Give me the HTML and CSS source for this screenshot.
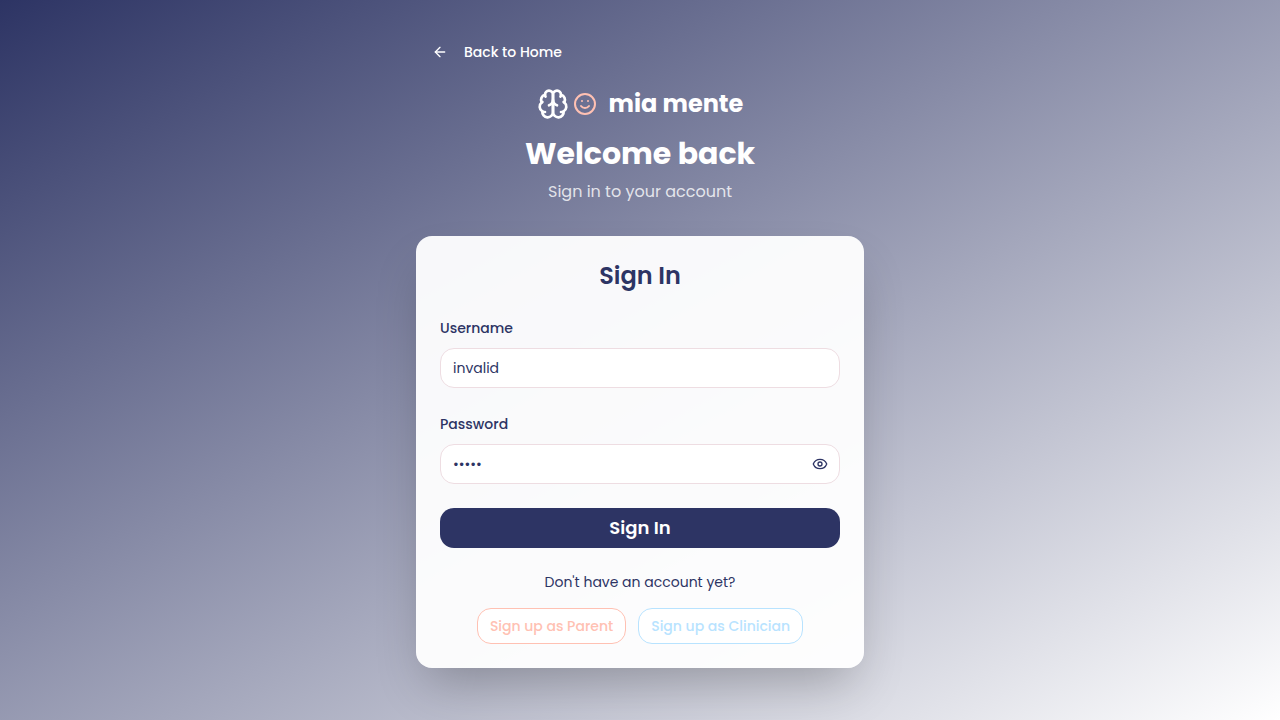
FILE: index.html
```html
<!DOCTYPE html>
<html lang="en">
<head>
<meta charset="utf-8">
<meta name="viewport" content="width=device-width, initial-scale=1">
<title>Sign In - mia mente</title>
<link rel="stylesheet" href="styles.css">
</head>
<body>
<main class="page">
  <div class="column">
    <a class="back" href="#">
      <svg class="icon icon-sm" viewBox="0 0 24 24" aria-hidden="true"><path d="m12 19-7-7 7-7"/><path d="M19 12H5"/></svg>
      Back to Home
    </a>
    <header class="intro">
      <div class="brand">
        <div class="marks">
          <svg class="icon icon-lg" viewBox="0 0 24 24" aria-hidden="true">
            <path d="M12 5a3 3 0 1 0-5.997.125 4 4 0 0 0-2.526 5.77 4 4 0 0 0 .556 6.588A4 4 0 1 0 12 18Z"/>
            <path d="M12 5a3 3 0 1 1 5.997.125 4 4 0 0 1 2.526 5.77 4 4 0 0 1-.556 6.588A4 4 0 1 1 12 18Z"/>
            <path d="M15 13a4.500 4.500 0 0 1-3-4 4.500 4.500 0 0 1-3 4"/>
            <path d="M17.599 6.500a3 3 0 0 0 .399-1.375"/>
            <path d="M6.003 5.125A3 3 0 0 0 6.401 6.500"/>
            <path d="M3.477 10.896a4 4 0 0 1 .585-.396"/>
            <path d="M19.938 10.500a4 4 0 0 1 .585.396"/>
            <path d="M6 18a4 4 0 0 1-1.967-.516"/>
            <path d="M19.967 17.484A4 4 0 0 1 18 18"/>
          </svg>
          <svg class="icon icon-md smile" viewBox="0 0 24 24" aria-hidden="true"><circle cx="12" cy="12" r="10"/><path d="M8 14s1.500 2 4 2 4-2 4-2"/><path d="M9 9h.01"/><path d="M15 9h.01"/></svg>
        </div>
        <span class="brand-name">mia mente</span>
      </div>
      <h1 class="welcome">Welcome back</h1>
      <p class="subtitle">Sign in to your account</p>
    </header>
    <section class="card">
      <h2 class="card-title">Sign In</h2>
      <form class="form">
        <div class="field">
          <label class="label" for="username">Username</label>
          <input class="input" id="username" type="text" value="invalid">
        </div>
        <div class="field">
          <label class="label" for="password">Password</label>
          <div class="password">
            <input class="input" id="password" type="password" value="wrong">
            <button class="reveal" type="button" aria-label="Show password">
              <svg class="icon icon-sm" viewBox="0 0 24 24" aria-hidden="true"><path d="M2.062 12.348a1 1 0 0 1 0-.696 10.750 10.750 0 0 1 19.876 0 1 1 0 0 1 0 .696 10.750 10.750 0 0 1-19.876 0"/><circle cx="12" cy="12" r="3"/></svg>
            </button>
          </div>
        </div>
        <button class="submit" type="submit">Sign In</button>
      </form>
      <p class="prompt">Don't have an account yet?</p>
      <div class="signup">
        <button class="outline parent" type="button">Sign up as Parent</button>
        <button class="outline clinician" type="button">Sign up as Clinician</button>
      </div>
    </section>
  </div>
</main>
</body>
</html>
```
FILE: styles.css
```css
* { box-sizing: border-box; }
body {
  margin: 0;
  font-family: Poppins, "Open Sans", sans-serif;
  color: #2d3464;
}
h1, h2, p { margin: 0; }
button, input { font: inherit; color: inherit; }
button { cursor: pointer; }

.page {
  min-height: 100vh;
  padding: 32px 16px;
  display: flex;
  justify-content: center;
  align-items: flex-start;
  background: linear-gradient(to bottom right, #2d3464, #ffffff);
}
.column { width: 100%; max-width: 448px; }

.icon {
  display: block;
  flex: none;
  fill: none;
  stroke: currentColor;
  stroke-width: 2;
  stroke-linecap: round;
  stroke-linejoin: round;
}
.icon-sm { width: 16px; height: 16px; }
.icon-md { width: 24px; height: 24px; }
.icon-lg { width: 32px; height: 32px; }

.back {
  display: inline-flex;
  align-items: center;
  gap: 16px;
  height: 40px;
  padding: 0 16px;
  font-size: 14px;
  font-weight: 500;
  color: #ffffff;
  text-decoration: none;
}

.intro {
  display: flex;
  flex-direction: column;
  align-items: center;
  margin: 16px 0 32px;
  text-align: center;
  color: #ffffff;
}
.brand { display: flex; align-items: center; gap: 12px; }
.marks { display: flex; align-items: center; gap: 4px; }
.smile { color: #ffc1b3; }
.brand-name { font-size: 24px; line-height: 32px; font-weight: 700; }
.welcome { margin-top: 16px; font-size: 30px; line-height: 36px; font-weight: 700; }
.subtitle { margin-top: 8px; font-size: 16px; line-height: 24px; color: rgba(255, 255, 255, 0.8); }

.card {
  padding: 24px;
  border-radius: 16px;
  background: rgba(255, 255, 255, 0.95);
  box-shadow: 0 25px 50px -12px rgba(0, 0, 0, 0.25);
}
.card-title { font-size: 24px; line-height: 32px; font-weight: 600; text-align: center; }
.form { display: flex; flex-direction: column; gap: 24px; margin-top: 24px; }
.field { display: flex; flex-direction: column; gap: 8px; }
.label { font-size: 14px; line-height: 24px; font-weight: 500; }
.input {
  display: block;
  width: 100%;
  height: 40px;
  padding: 0 12px;
  border: 1px solid #eedde2;
  border-radius: 14px;
  background: #ffffff;
  font-size: 14px;
}
.password { position: relative; }
.password .input { padding-right: 40px; }
.reveal {
  position: absolute;
  top: 0;
  right: 0;
  display: flex;
  align-items: center;
  height: 100%;
  padding: 0 12px;
  border: 0;
  background: none;
}
.submit {
  height: 40px;
  padding: 0 16px;
  border: 0;
  border-radius: 14px;
  background: #2d3464;
  color: #ffffff;
  font-size: 18px;
  line-height: 28px;
  font-weight: 600;
}
.prompt { margin-top: 24px; font-size: 14px; line-height: 20px; text-align: center; }
.signup { display: flex; flex-wrap: wrap; justify-content: center; gap: 12px; margin-top: 16px; }
.outline {
  height: 36px;
  padding: 0 12px;
  border: 1px solid currentColor;
  border-radius: 14px;
  background: #ffffff;
  font-size: 14px;
  font-weight: 500;
}
.parent { color: #ffc1b3; }
.clinician { color: #b8e3ff; }
```
